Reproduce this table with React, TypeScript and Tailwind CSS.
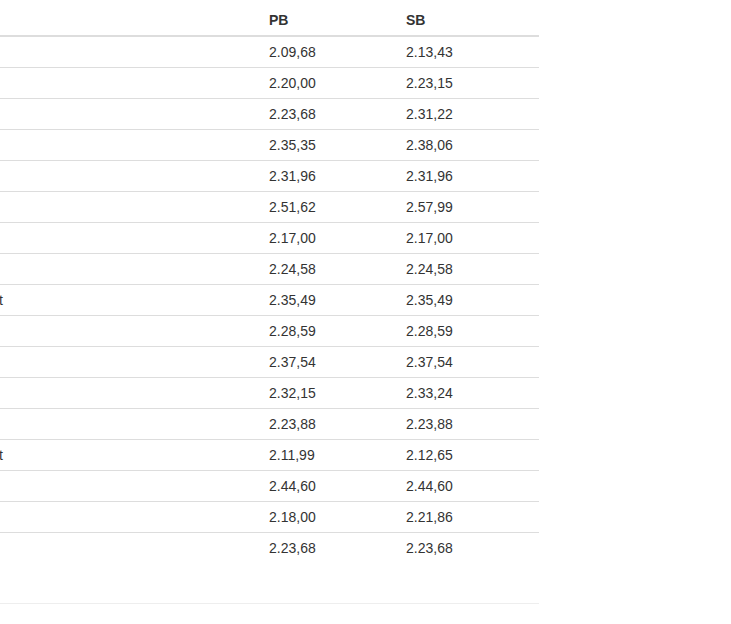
const rows = [
  { name: "", pb: "2.09,68", sb: "2.13,43" },
  { name: "", pb: "2.20,00", sb: "2.23,15" },
  { name: "", pb: "2.23,68", sb: "2.31,22" },
  { name: "", pb: "2.35,35", sb: "2.38,06" },
  { name: "", pb: "2.31,96", sb: "2.31,96" },
  { name: "", pb: "2.51,62", sb: "2.57,99" },
  { name: "", pb: "2.17,00", sb: "2.17,00" },
  { name: "", pb: "2.24,58", sb: "2.24,58" },
  { name: "t", pb: "2.35,49", sb: "2.35,49" },
  { name: "", pb: "2.28,59", sb: "2.28,59" },
  { name: "", pb: "2.37,54", sb: "2.37,54" },
  { name: "", pb: "2.32,15", sb: "2.33,24" },
  { name: "", pb: "2.23,88", sb: "2.23,88" },
  { name: "t", pb: "2.11,99", sb: "2.12,65" },
  { name: "", pb: "2.44,60", sb: "2.44,60" },
  { name: "", pb: "2.18,00", sb: "2.21,86" },
  { name: "", pb: "2.23,68", sb: "2.23,68" },
];

export default function App() {
  return (
    <div className="min-h-screen bg-white pt-[5px] font-['Liberation_Sans',Arial,sans-serif] text-[14px] leading-[20px] text-[#333]">
      <table className="w-[539px] table-fixed border-collapse">
        <colgroup>
          <col className="w-[264px]" />
          <col className="w-[137px]" />
          <col className="w-[138px]" />
        </colgroup>
        <thead>
          <tr>
            <th className="border-b-2 border-[#ddd] p-[5px] text-left font-bold"></th>
            <th className="border-b-2 border-[#ddd] p-[5px] text-left font-bold">PB</th>
            <th className="border-b-2 border-[#ddd] p-[5px] text-left font-bold">SB</th>
          </tr>
        </thead>
        <tbody>
          {rows.map((row, i) => (
            <tr key={i}>
              <td className="border-t border-[#ddd] py-[5px] pr-[5px] pl-0 text-left">
                <span className="-ml-[1px] block">{row.name}</span>
              </td>
              <td className="border-t border-[#ddd] p-[5px]">{row.pb}</td>
              <td className="border-t border-[#ddd] p-[5px]">{row.sb}</td>
            </tr>
          ))}
        </tbody>
      </table>
      <div className="mt-[40px] w-[539px] border-t border-[#eee]" />
    </div>
  );
}
